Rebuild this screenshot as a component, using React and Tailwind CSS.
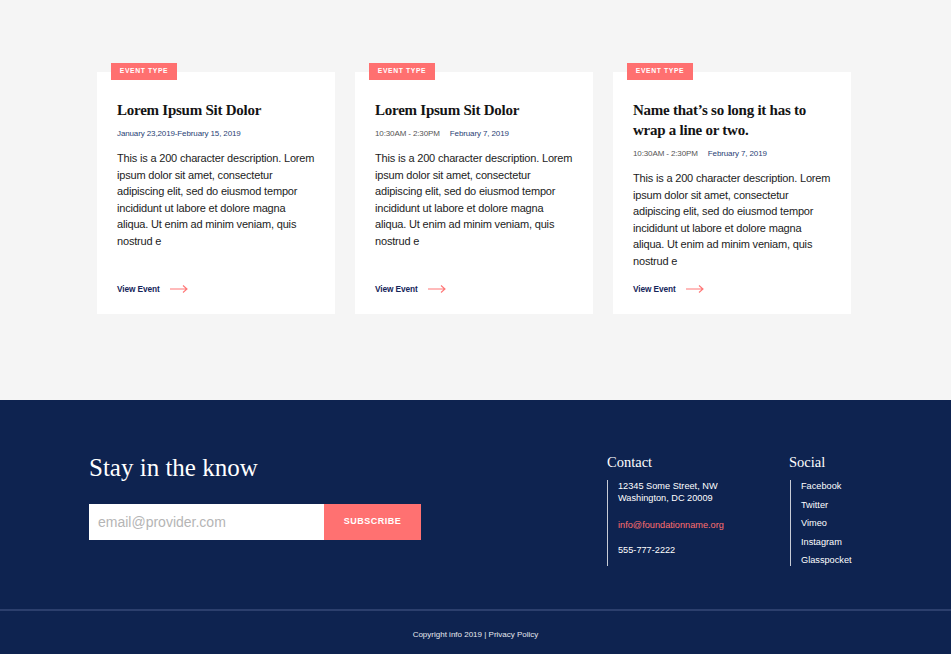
import React from "react";

const sans = { fontFamily: '"Liberation Sans", Arial, sans-serif' };

function Arrow() {
  return (
    <svg width="18" height="8" viewBox="0 0 18 8" fill="none" className="block">
      <path d="M0 4H17M13 0.5L17 4L13 7.5" stroke="#ff7676" strokeWidth="1.1" />
    </svg>
  );
}

const descLines = [
  "This is a 200 character description. Lorem",
  "ipsum dolor sit amet, consectetur",
  "adipiscing elit, sed do eiusmod tempor",
  "incididunt ut labore et dolore magna",
  "aliqua. Ut enim ad minim veniam, quis",
  "nostrud e",
];

function Card({ title, time, date }) {
  return (
    <div className="relative w-[238px] h-[242px] bg-white flex flex-col px-5 pt-[28px] pb-[19px]">
      <div className="absolute left-[14px] -top-[9px] w-[66px] h-[17px] bg-[#ff7070] flex items-center justify-center text-white font-bold text-[6.8px] tracking-[0.6px]">
        EVENT TYPE
      </div>
      <h3 className="font-['Liberation_Serif',serif] font-bold text-[15px] leading-[20px] tracking-[-0.25px] text-[#141414]">
        {title.map((t, i) => (
          <span key={i} className="block whitespace-nowrap">{t}</span>
        ))}
      </h3>
      <div className="mt-[8px] flex gap-[10px] text-[8px] leading-[12px] tracking-[-0.12px] whitespace-nowrap">
        {time && <span className="text-[#555]">{time}</span>}
        <span className="text-[#2a3f75]">{date}</span>
      </div>
      <p className="mt-[10px] text-[11px] leading-[16.6px] tracking-[-0.18px] text-[#1c1c1c]">
        {descLines.map((l, i) => (
          <span key={i} className="block whitespace-nowrap">{l}</span>
        ))}
      </p>
      <div className="mt-auto flex items-center gap-[10px] h-[12px]">
        <span className="font-bold text-[8.3px] text-[#15265a] tracking-[-0.1px]">View Event</span>
        <Arrow />
      </div>
    </div>
  );
}

export default function App() {
  return (
    <div className="w-full min-h-[654px]" style={sans}>
      <section className="h-[400px] bg-[#f5f5f5] pt-[72px] pl-[97px] flex gap-5 items-start">
        <Card title={["Lorem Ipsum Sit Dolor"]} date="January 23,2019-February 15, 2019" />
        <Card title={["Lorem Ipsum Sit Dolor"]} time="10:30AM - 2:30PM" date="February 7, 2019" />
        <Card
          title={["Name that\u2019s so long it has to", "wrap a line or two."]}
          time="10:30AM - 2:30PM"
          date="February 7, 2019"
        />
      </section>
      <footer className="h-[254px] bg-[#0e2350] text-white">
        <div className="h-[209px] flex pt-[53px] pl-[89px]">
          <div className="w-[518px]">
            <h2 className="font-['Liberation_Serif',serif] text-[25px] leading-[30px] text-white">
              Stay in the know
            </h2>
            <div className="mt-[21px] flex h-[36px]">
              <div className="w-[235px] bg-white flex items-center pl-[9px] text-[14px] text-[#b5b5b5]">
                email@provider.com
              </div>
              <button className="w-[97px] bg-[#ff7171] text-white font-bold text-[9px] tracking-[0.5px]">
                SUBSCRIBE
              </button>
            </div>
          </div>
          <div className="w-[182px]">
            <h4 className="font-['Liberation_Serif',serif] text-[14.5px] leading-[18px]">Contact</h4>
            <div className="mt-[9px] border-l border-[#c8ccd6] pl-[10px] h-[86px] text-[9.2px] leading-[12px]">
              <div>12345 Some Street, NW</div>
              <div>Washington, DC 20009</div>
              <div className="mt-[15px] text-[#ff6f6f]">info@foundationname.org</div>
              <div className="mt-[13px]">555-777-2222</div>
            </div>
          </div>
          <div>
            <h4 className="font-['Liberation_Serif',serif] text-[14.5px] leading-[18px]">Social</h4>
            <div className="mt-[9px] ml-px border-l border-[#c8ccd6] pl-[10px] h-[86px] flex flex-col gap-[6.5px] text-[9.2px] leading-[12px]">
              <div>Facebook</div>
              <div>Twitter</div>
              <div>Vimeo</div>
              <div>Instagram</div>
              <div>Glasspocket</div>
            </div>
          </div>
        </div>
        <div className="border-t-2 border-[#2c3f6d] pt-[18px] text-center text-[8px] leading-[12px] text-[#e6e8ee]">
          Copyright info 2019 | Privacy Policy
        </div>
      </footer>
    </div>
  );
}
